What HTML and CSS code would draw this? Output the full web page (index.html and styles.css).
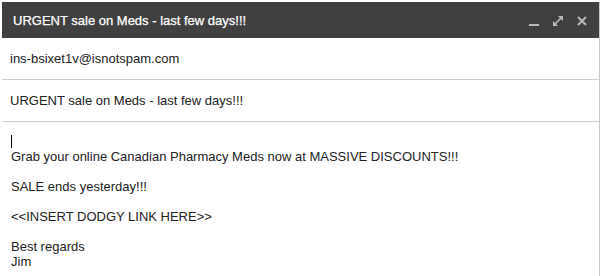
FILE: index.html
```html
<!DOCTYPE html>
<html>
<head>
<meta charset="utf-8">
<link rel="stylesheet" href="styles.css">
</head>
<body>
<div class="compose">
  <div class="titlebar">
    <span class="title">URGENT sale on Meds - last few days!!!</span>
    <div class="controls">
      <svg class="icon" viewBox="0 0 10 10" width="10" height="10"><rect x="0" y="8" width="10" height="2" fill="#b9b9b9"/></svg>
      <svg class="icon" viewBox="0 0 10 10" width="10" height="10"><path d="M5 0H10V5Z M0 5V10H5Z" fill="#b9b9b9"/><path d="M2 8L8 2" stroke="#b9b9b9" stroke-width="1.6"/></svg>
      <svg class="icon" viewBox="0 0 10 10" width="10" height="10"><path d="M1 1L9 9M9 1L1 9" stroke="#b9b9b9" stroke-width="2"/></svg>
    </div>
  </div>
  <div class="field">ins-bsixet1v@isnotspam.com</div>
  <div class="field">URGENT sale on Meds - last few days!!!</div>
  <div class="body">
    <div class="line"><span class="cursor"></span></div>
    <p>Grab your online Canadian Pharmacy Meds now at MASSIVE DISCOUNTS!!!</p>
    <p>SALE ends yesterday!!!</p>
    <p>&lt;&lt;INSERT DODGY LINK HERE&gt;&gt;</p>
    <p>Best regards<br>Jim</p>
  </div>
</div>
</body>
</html>
```
FILE: styles.css
```css
html, body {
  margin: 0;
  padding: 0;
  background: #fff;
}
body {
  font-family: "Liberation Sans", Arial, sans-serif;
  font-size: 13px;
  color: #222;
  padding: 2px 2px 0 2px;
  height: 276px;
  box-sizing: border-box;
  overflow: hidden;
}
.compose {
  border-right: 1px solid #c8c8c8;
  height: 100%;
}
.titlebar {
  height: 36px;
  background: #404040;
  display: flex;
  align-items: center;
  justify-content: space-between;
  padding: 0 12px 0 11px;
}
.title {
  color: #fff;
  font-size: 13px;
  -webkit-text-stroke: 0.25px #fff;
}
.controls {
  display: flex;
  gap: 14px;
  align-items: center;
  padding-top: 1px;
}
.icon {
  display: block;
}
.field {
  height: 41px;
  border-bottom: 1px solid #cfcfcf;
  display: flex;
  align-items: center;
  padding-left: 8px;
}
.body {
  padding: 12px 8px 0 9px;
  line-height: 15px;
}
.line {
  height: 15px;
}
.cursor {
  display: inline-block;
  width: 1px;
  height: 13px;
  background: #000;
  vertical-align: top;
  margin-top: 1px;
}
.body p {
  margin: 0 0 15px 0;
}
```
